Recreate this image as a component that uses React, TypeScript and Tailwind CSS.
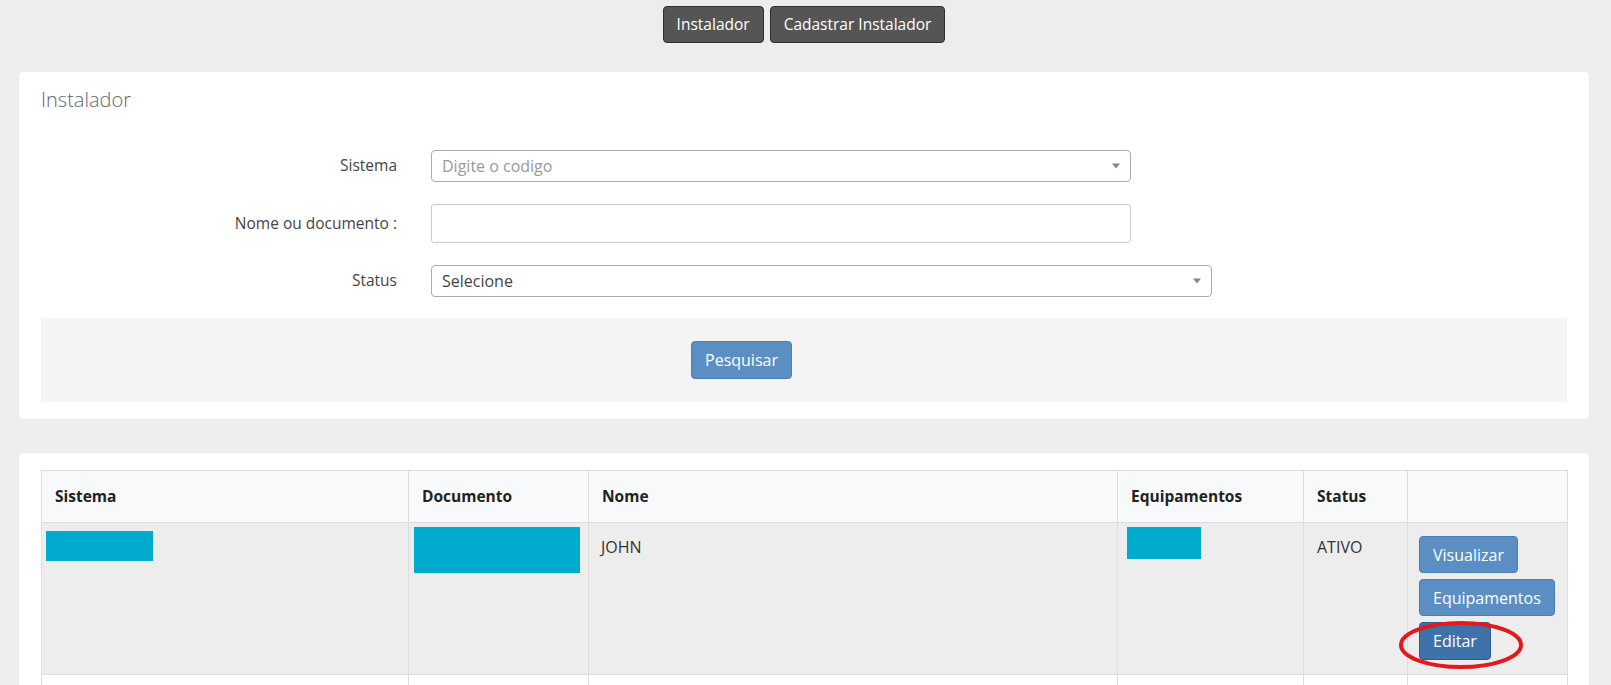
import React from "react";

const Caret = () => (
  <span className="absolute right-[10px] top-1/2 -translate-y-1/2 w-0 h-0 border-l-[4px] border-r-[4px] border-t-[5px] border-l-transparent border-r-transparent border-t-[#888]" />
);

const FormRow = ({ label, children }: { label: string; children: React.ReactNode }) => (
  <div className="flex items-center">
    <label className="w-[356px] text-right text-[15.5px] text-[#444]">{label}</label>
    <div className="ml-[34px]">{children}</div>
  </div>
);

const App = () => {
  return (
    <div className="min-h-screen bg-[#ededed] pl-[19px] pr-[22px] font-['Open_Sans',sans-serif] text-[#333]">
      {/* top navigation */}
      <div className="flex justify-center gap-[6px] pt-[6px]">
        <button className="h-[37px] px-[13px] rounded-[4px] bg-[#555] border border-[#2f2f2f] text-white text-[15.5px]">
          Instalador
        </button>
        <button className="h-[37px] px-[13px] rounded-[4px] bg-[#555] border border-[#2f2f2f] text-white text-[15.5px]">
          Cadastrar Instalador
        </button>
      </div>

      {/* filtros */}
      <div className="mt-[29px] bg-white rounded-[4px] px-[22px] pt-[14px] pb-[17px]">
        <h2 className="text-[20px] leading-[28px] font-light text-[#666]">Instalador</h2>
        <div className="mt-[36px] flex flex-col gap-[22px]">
          <FormRow label="Sistema">
            <div className="relative w-[700px] h-[32px] border border-[#aaa] rounded-[4px] flex items-center pl-[10px] text-[16px] text-[#999]">
              Digite o codigo
              <Caret />
            </div>
          </FormRow>
          <FormRow label="Nome ou documento :">
            <input className="w-[700px] h-[39px] border border-[#ccc] rounded-[3px] px-[10px] text-[16px] outline-none" />
          </FormRow>
          <FormRow label="Status">
            <div className="relative w-[781px] h-[32px] border border-[#aaa] rounded-[4px] flex items-center pl-[10px] text-[16px] text-[#444]">
              Selecione
              <Caret />
            </div>
          </FormRow>
        </div>
        <div className="mt-[21px] h-[84px] bg-[#f4f4f4] flex items-center pl-[650px]">
          <button className="h-[38px] w-[101px] rounded-[4px] bg-[#5b8fc4] border border-[#4a7db3] text-white text-[16px]">
            Pesquisar
          </button>
        </div>
      </div>

      {/* resultados */}
      <div className="mt-[34px] bg-white rounded-t-[4px] px-[22px] pt-[17px]">
        <table className="w-[1526px] table-fixed border-collapse border border-[#ddd] text-[16px]">
          <colgroup>
            <col className="w-[367px]" />
            <col className="w-[180px]" />
            <col className="w-[529px]" />
            <col className="w-[186px]" />
            <col className="w-[104px]" />
            <col className="w-[160px]" />
          </colgroup>
          <thead>
            <tr className="bg-[#f8f9fa] h-[52px] text-left text-[#222] text-[15.5px]">
              <th className="border border-[#ddd] px-[13px] font-bold">Sistema</th>
              <th className="border border-[#ddd] px-[13px] font-bold">Documento</th>
              <th className="border border-[#ddd] px-[13px] font-bold">Nome</th>
              <th className="border border-[#ddd] px-[13px] font-bold">Equipamentos</th>
              <th className="border border-[#ddd] px-[13px] font-bold">Status</th>
              <th className="border border-[#ddd] px-[13px]"></th>
            </tr>
          </thead>
          <tbody>
            <tr className="bg-[#ededed] align-top">
              <td className="border border-[#ddd] p-0">
                <div className="ml-[4px] mt-[8px] w-[107px] h-[30px] bg-[#00abcd]" />
              </td>
              <td className="border border-[#ddd] p-0">
                <div className="ml-[5px] mt-[4px] w-[166px] h-[46px] bg-[#00abcd]" />
              </td>
              <td className="border border-[#ddd] px-[12px] pt-[13px] leading-[22px]">JOHN</td>
              <td className="border border-[#ddd] p-0">
                <div className="ml-[9px] mt-[4px] w-[74px] h-[32px] bg-[#00abcd]" />
              </td>
              <td className="border border-[#ddd] px-[13px] pt-[13px] leading-[22px]">ATIVO</td>
              <td className="relative border border-[#ddd] pl-[11px] pt-[13px] pb-[14px]">
                <div className="flex flex-col items-start gap-[6px]">
                  <button className="h-[37px] px-[13px] rounded-[4px] bg-[#5b8fc4] border border-[#4a7db3] text-white text-[16px]">
                    Visualizar
                  </button>
                  <button className="h-[37px] px-[13px] rounded-[4px] bg-[#5b8fc4] border border-[#4a7db3] text-white text-[16px]">
                    Equipamentos
                  </button>
                  <button className="h-[38px] px-[13px] rounded-[4px] bg-[#3f72a9] border border-[#2d5c91] text-white text-[16px]">
                    Editar
                  </button>
                </div>
                <svg className="absolute left-[-13px] top-[94px] pointer-events-none" width="132" height="56" viewBox="0 0 132 56">
                  <ellipse cx="66" cy="28" rx="60" ry="22" fill="none" stroke="#e3191b" strokeWidth="4" />
                </svg>
              </td>
            </tr>
            <tr className="bg-white h-[40px]">
              <td className="border border-[#ddd]"></td>
              <td className="border border-[#ddd]"></td>
              <td className="border border-[#ddd]"></td>
              <td className="border border-[#ddd]"></td>
              <td className="border border-[#ddd]"></td>
              <td className="border border-[#ddd]"></td>
            </tr>
          </tbody>
        </table>
      </div>
    </div>
  );
};

export default App;
